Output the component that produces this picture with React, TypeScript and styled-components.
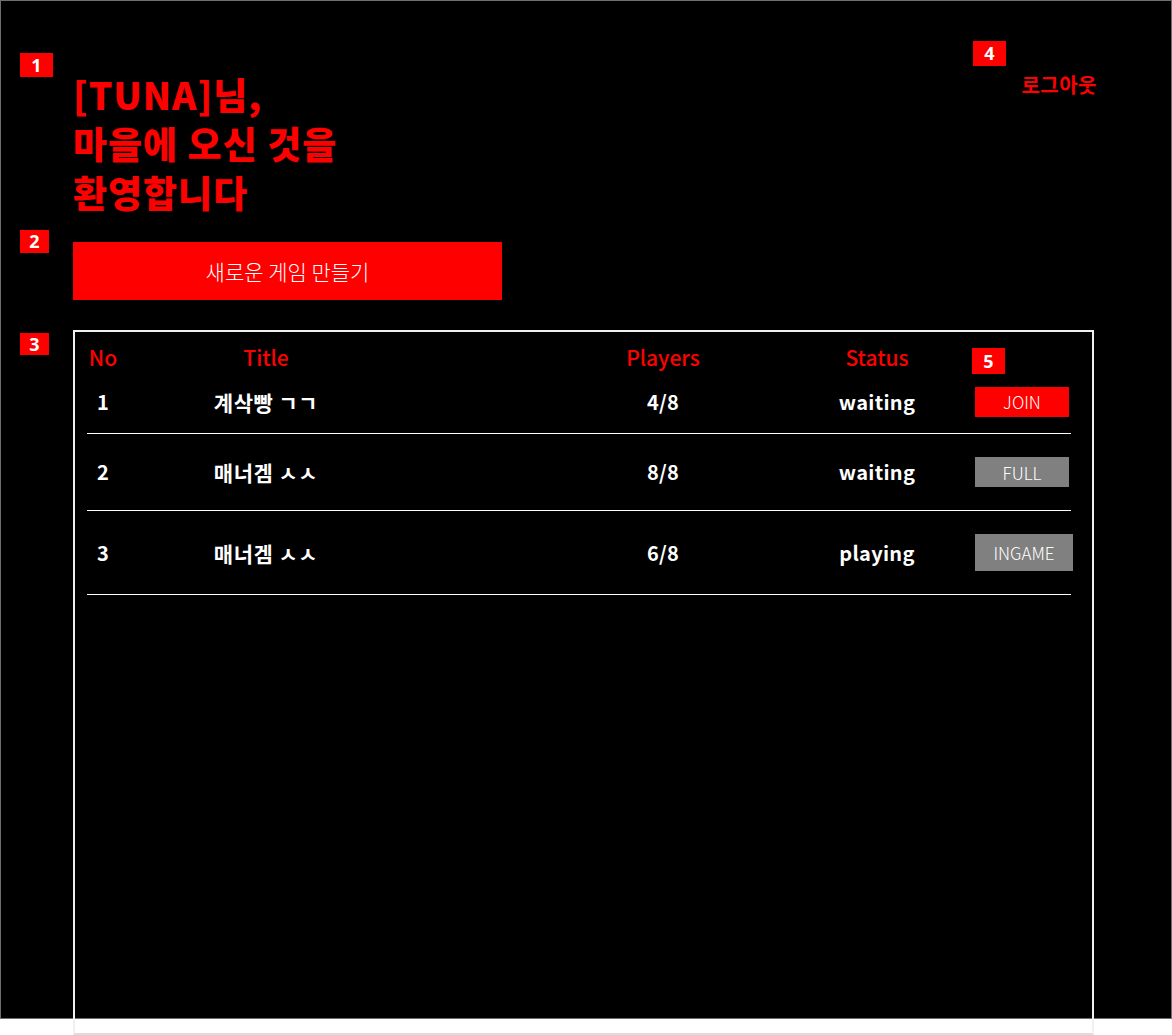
import React from "react";
import styled, { createGlobalStyle } from "styled-components";

const GlobalStyle = createGlobalStyle`
  html, body { margin: 0; padding: 0; background: #ffffff; }
  * { box-sizing: border-box; }
  body { font-family: "Noto Sans CJK KR", "Noto Sans", sans-serif; }
`;

const RED = "#ff0000";

const Screen = styled.div`
  width: 1172px;
  min-height: 1035px;
  background: #fff;
`;

const Frame = styled.div`
  position: relative;
  width: 1172px;
  height: 1019px;
  background: #000;
  border: 1px solid #6e6e6e;
  padding: 69px 74px 0 72px;
`;

const Badge = styled.div<{ $x: number; $y: number; $w: number; $h: number }>`
  position: absolute;
  left: ${(p) => p.$x}px;
  top: ${(p) => p.$y}px;
  width: ${(p) => p.$w}px;
  height: ${(p) => p.$h}px;
  background: ${RED};
  color: #fff;
  font-family: "Noto Sans", sans-serif;
  font-weight: 700;
  font-size: 18px;
  line-height: ${(p) => p.$h}px;
  text-align: center;
  z-index: 2;
`;

const Header = styled.header`
  display: flex;
  justify-content: space-between;
  align-items: flex-start;
`;

const Heading = styled.h1`
  margin: 0;
  color: ${RED};
  font-family: "Noto Sans CJK KR", sans-serif;
  font-weight: 900;
  font-size: 37px;
  line-height: 49px;
  letter-spacing: 1px;
`;

const Logout = styled.button`
  margin-top: 1px;
  padding: 0;
  border: 0;
  background: none;
  color: ${RED};
  font-family: "Noto Sans CJK KR", sans-serif;
  font-weight: 700;
  font-size: 20px;
  line-height: 28px;
  letter-spacing: 0.5px;
  cursor: pointer;
`;

const CreateButton = styled.button`
  display: block;
  margin-top: 25px;
  width: 429px;
  height: 58px;
  border: 0;
  background: ${RED};
  color: #fff;
  font-family: "Noto Sans CJK KR", sans-serif;
  font-weight: 300;
  font-size: 21px;
  cursor: pointer;
`;

const TableBox = styled.section`
  position: relative;
  margin-top: 30px;
  width: 1021px;
  height: 705px;
  border: 2px solid #f0f0f0;
  border-bottom-color: #dcdcdc;
  padding: 0 21px 0 12px;
`;

const Grid = `
  display: grid;
  grid-template-columns: [no] 32px [title] 294px 150px [players] 200px 17px [status] 194px [action] 1fr;
`;

const HeadRow = styled.div`
  ${Grid}
  height: 38px;
  align-items: end;
`;

const Row = styled.div<{ $h: number }>`
  ${Grid}
  height: ${(p) => p.$h}px;
  align-items: center;
  border-bottom: 1px solid #fff;
`;

const HeadCell = styled.div<{ $col: string }>`
  grid-column: ${(p) => p.$col};
  text-align: center;
  color: ${RED};
  font-family: "Noto Sans CJK KR", sans-serif;
  font-weight: 500;
  font-size: 21px;
  line-height: 26px;
`;

const Cell = styled.div<{ $col: string; $wide?: boolean }>`
  grid-column: ${(p) => p.$col};
  text-align: center;
  color: #fff;
  font-family: "Noto Sans CJK KR", sans-serif;
  font-weight: 700;
  font-size: ${(p) => (p.$wide ? 21 : 20)}px;
  line-height: 26px;
  letter-spacing: ${(p) => (p.$wide ? "0.5px" : "0.3px")};
`;

const ActionCell = styled.div`
  grid-column: action;
  display: flex;
  justify-content: flex-start;
  padding-left: 1px;
`;

const ActionButton = styled.button<{ $kind: "join" | "full" | "ingame" }>`
  width: ${(p) => (p.$kind === "ingame" ? 98 : 94)}px;
  height: ${(p) => (p.$kind === "ingame" ? 37 : 30)}px;
  border: 0;
  padding: 0;
  background: ${(p) => (p.$kind === "join" ? RED : "#808080")};
  color: #fff;
  font-family: "Noto Sans CJK KR", sans-serif;
  font-weight: 300;
  font-size: 17px;
  cursor: pointer;
`;

const games = [
  { no: 1, title: "계삭빵 ㄱㄱ", players: "4/8", status: "waiting", kind: "join" as const, label: "JOIN", h: 64 },
  { no: 2, title: "매너겜 ㅅㅅ", players: "8/8", status: "waiting", kind: "full" as const, label: "FULL", h: 77 },
  { no: 3, title: "매너겜 ㅅㅅ", players: "6/8", status: "playing", kind: "ingame" as const, label: "INGAME", h: 84 },
];

export default function App() {
  return (
    <>
      <GlobalStyle />
      <Screen>
        <Frame>
          <Badge $x={19} $y={52} $w={33} $h={24}>1</Badge>
          <Badge $x={19} $y={229} $w={29} $h={23}>2</Badge>
          <Badge $x={19} $y={332} $w={29} $h={22}>3</Badge>
          <Badge $x={972} $y={40} $w={33} $h={25}>4</Badge>
          <Header>
            <Heading>
              [TUNA]님,
              <br />
              마을에 오신 것을
              <br />
              환영합니다
            </Heading>
            <Logout>로그아웃</Logout>
          </Header>
          <CreateButton>새로운 게임 만들기</CreateButton>
          <TableBox>
            <Badge $x={897} $y={16} $w={33} $h={26}>5</Badge>
            <HeadRow>
              <HeadCell $col="no">No</HeadCell>
              <HeadCell $col="title">Title</HeadCell>
              <HeadCell $col="players">Players</HeadCell>
              <HeadCell $col="status">Status</HeadCell>
            </HeadRow>
            {games.map((g) => (
              <Row key={g.no} $h={g.h}>
                <Cell $col="no">{g.no}</Cell>
                <Cell $col="title" $wide>{g.title}</Cell>
                <Cell $col="players">{g.players}</Cell>
                <Cell $col="status">{g.status}</Cell>
                <ActionCell>
                  <ActionButton $kind={g.kind}>{g.label}</ActionButton>
                </ActionCell>
              </Row>
            ))}
          </TableBox>
        </Frame>
      </Screen>
    </>
  );
}
